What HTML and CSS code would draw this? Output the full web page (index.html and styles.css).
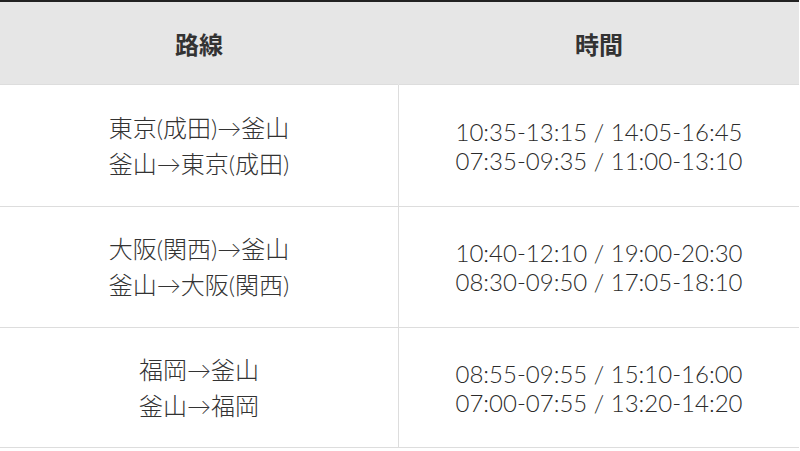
FILE: index.html
```html
<!DOCTYPE html>
<html lang="ja">
<head>
<meta charset="utf-8">
<link rel="stylesheet" href="styles.css">
</head>
<body>
<table class="schedule">
  <thead>
    <tr><th class="col-route">路線</th><th class="col-time">時間</th></tr>
  </thead>
  <tbody>
    <tr class="row-1">
      <td class="route">東京(成田)→釜山<br>釜山→東京(成田)</td>
      <td class="time">10:35-13:15 / 14:05-16:45<br>07:35-09:35 / 11:00-13:10</td>
    </tr>
    <tr class="row-2">
      <td class="route">大阪(関西)→釜山<br>釜山→大阪(関西)</td>
      <td class="time">10:40-12:10 / 19:00-20:30<br>08:30-09:50 / 17:05-18:10</td>
    </tr>
    <tr class="row-3">
      <td class="route">福岡→釜山<br>釜山→福岡</td>
      <td class="time">08:55-09:55 / 15:10-16:00<br>07:00-07:55 / 13:20-14:20</td>
    </tr>
  </tbody>
</table>
</body>
</html>
```
FILE: styles.css
```css
html, body {
  margin: 0;
  padding: 0;
  background: #ffffff;
}
body {
  font-family: Lato, "Noto Sans CJK JP", sans-serif;
  color: #333333;
}
.schedule {
  width: 799px;
  border-collapse: collapse;
  border-top: 2px solid #222222;
  table-layout: fixed;
}
.schedule th {
  background: #e6e6e6;
  height: 82px;
  padding: 0;
  font-family: "Noto Sans CJK JP", sans-serif;
  font-size: 24px;
  font-weight: bold;
  color: #333333;
  text-align: center;
  vertical-align: middle;
}
.col-route {
  width: 398px;
  border-right: 1px solid #e6e6e6;
}
.schedule td {
  padding: 0;
  text-align: center;
  vertical-align: middle;
  border-top: 1px solid #dddddd;
  border-bottom: 1px solid #dddddd;
}
.schedule td.route {
  border-right: 1px solid #dddddd;
  font-family: Lato, "Noto Sans CJK JP", sans-serif;
  font-size: 24px;
  font-weight: 300;
  line-height: 36px;
  color: #333333;
}
.schedule td.time {
  font-size: 24px;
  font-weight: 300;
  line-height: 29px;
  color: #2b2b2b;
}
.row-1 td { height: 121px; }
.row-2 td { height: 120px; }
.row-3 td { height: 119px; }
```
